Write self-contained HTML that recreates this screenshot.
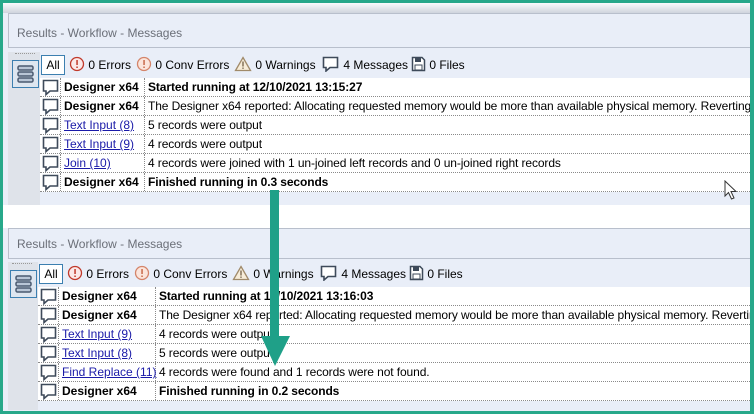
<!DOCTYPE html>
<html><head><style>
*{margin:0;padding:0;box-sizing:border-box}
body{width:754px;height:414px;overflow:hidden;background:#fff;font-family:"Liberation Sans",sans-serif;font-size:12px;color:#000;position:relative}
.a{position:absolute}
.title{position:absolute;left:8px;right:0;border:1px solid #b8bfcc;border-right:none;background:#e9eef8;color:#6b6f78;font-size:12px;padding-left:8px}
.panel{position:absolute;left:0;right:0;background:#e9eef8}
.rail{position:absolute;background:#dfe3ea}
.row{position:absolute;right:0;height:19px;background:#fff;border-bottom:1px dotted #8a8a8a;white-space:nowrap;line-height:18px;overflow:hidden}
.row span{position:absolute;top:0}
.b{font-weight:bold}
.l{color:#1a1aa8;text-decoration:underline}
.sep{position:absolute;top:0;bottom:0;border-left:1px dotted #8a8a8a}
.tb{position:absolute;white-space:nowrap;height:20px;line-height:20px}
.tb span{position:absolute}
</style></head><body>
<div class="panel" style="top:3px;height:202px"></div>
<div class="a" style="top:3px;left:0;right:0;height:10px;background:linear-gradient(#fafbfd,#cfd4dd)"></div>
<div class="title" style="top:13px;height:35px;line-height:38px">Results - Workflow - Messages</div>
<div class="rail" style="left:8px;top:52px;width:32px;height:153px"></div>
<div class="a" style="left:15px;top:53px;width:20px;border-top:1px dotted #999"></div>
<div class="a" style="left:12px;top:60px;width:27px;height:28px;border:1px solid #3c7fb0;background:#dde6f0">
<svg width="25" height="26" viewBox="0 0 25 26"><g fill="#b9c6d6" stroke="#4a5a70" stroke-width="1.5"><rect x="5" y="5" width="15" height="4" rx="1.5"/><rect x="5" y="11" width="15" height="4" rx="1.5"/><rect x="5" y="17" width="15" height="4" rx="1.5"/></g></svg></div>
<div class="tb" style="left:41px;top:55px;width:700px">
<span style="left:0;top:0;width:24px;height:20px;border:1px solid #3c7fb0;background:#fff;text-align:center;line-height:18px">All</span>
<span style="left:28px"><svg width="16" height="16" style="vertical-align:-3px"><circle cx="8" cy="8" r="6.5" fill="#fbe9e9" stroke="#c0392b" stroke-width="1.3"/><rect x="7.3" y="4" width="1.5" height="5" fill="#c0392b"/><rect x="7.3" y="10.5" width="1.5" height="1.5" fill="#c0392b"/></svg> 0 Errors</span>
<span style="left:95px"><svg width="16" height="16" style="vertical-align:-3px"><circle cx="8" cy="8" r="6.5" fill="#fbe5dc" stroke="#d4846a" stroke-width="1.3"/><rect x="7.3" y="4" width="1.5" height="5" fill="#c86a4a"/><rect x="7.3" y="10.5" width="1.5" height="1.5" fill="#c86a4a"/></svg> 0 Conv Errors</span>
<span style="left:193px"><svg width="18" height="16" style="vertical-align:-3px"><path d="M9 1.5 L16.5 14.5 H1.5 Z" fill="#f7ecd8" stroke="#a08a6a" stroke-width="1.3"/><rect x="8.3" y="5.5" width="1.4" height="5" fill="#7a6a50"/><rect x="8.3" y="11.5" width="1.4" height="1.4" fill="#7a6a50"/></svg> 0 Warnings</span>
<span style="left:281px"><svg width="18" height="16" style="vertical-align:-3px"><path d="M1.5 1.5 H15.5 V11.5 H8 L4 15 V11.5 H1.5 Z" fill="#fff" stroke="#3e4a5a" stroke-width="1.6"/></svg> 4 Messages</span>
<span style="left:370px"><svg width="15" height="16" style="vertical-align:-3px"><path d="M1.5 1.5 H11 L13.5 4 V14.5 H1.5 Z" fill="#fff" stroke="#3e4a5a" stroke-width="1.5"/><rect x="4" y="2" width="6" height="4" fill="#3e4a5a"/><rect x="4" y="9" width="7" height="5" fill="none" stroke="#3e4a5a"/></svg> 0 Files</span>
</div>
<div id="t1"></div>
<div class="panel" style="top:228px;height:186px"></div>
<div class="title" style="top:228px;height:31px;line-height:30px">Results - Workflow - Messages</div>
<div class="rail" style="left:8px;top:262px;width:30px;height:148px"></div>
<div class="a" style="left:12px;top:263px;width:20px;border-top:1px dotted #999"></div>
<div class="a" style="left:10px;top:270px;width:27px;height:28px;border:1px solid #3c7fb0;background:#dde6f0">
<svg width="25" height="26" viewBox="0 0 25 26"><g fill="#b9c6d6" stroke="#4a5a70" stroke-width="1.5"><rect x="5" y="5" width="15" height="4" rx="1.5"/><rect x="5" y="11" width="15" height="4" rx="1.5"/><rect x="5" y="17" width="15" height="4" rx="1.5"/></g></svg></div>
<div class="tb" style="left:39px;top:264px;width:700px">
<span style="left:0;top:0;width:24px;height:20px;border:1px solid #3c7fb0;background:#fff;text-align:center;line-height:18px">All</span>
<span style="left:28px"><svg width="16" height="16" style="vertical-align:-3px"><circle cx="8" cy="8" r="6.5" fill="#fbe9e9" stroke="#c0392b" stroke-width="1.3"/><rect x="7.3" y="4" width="1.5" height="5" fill="#c0392b"/><rect x="7.3" y="10.5" width="1.5" height="1.5" fill="#c0392b"/></svg> 0 Errors</span>
<span style="left:95px"><svg width="16" height="16" style="vertical-align:-3px"><circle cx="8" cy="8" r="6.5" fill="#fbe5dc" stroke="#d4846a" stroke-width="1.3"/><rect x="7.3" y="4" width="1.5" height="5" fill="#c86a4a"/><rect x="7.3" y="10.5" width="1.5" height="1.5" fill="#c86a4a"/></svg> 0 Conv Errors</span>
<span style="left:193px"><svg width="18" height="16" style="vertical-align:-3px"><path d="M9 1.5 L16.5 14.5 H1.5 Z" fill="#f7ecd8" stroke="#a08a6a" stroke-width="1.3"/><rect x="8.3" y="5.5" width="1.4" height="5" fill="#7a6a50"/><rect x="8.3" y="11.5" width="1.4" height="1.4" fill="#7a6a50"/></svg> 0 Warnings</span>
<span style="left:281px"><svg width="18" height="16" style="vertical-align:-3px"><path d="M1.5 1.5 H15.5 V11.5 H8 L4 15 V11.5 H1.5 Z" fill="#fff" stroke="#3e4a5a" stroke-width="1.6"/></svg> 4 Messages</span>
<span style="left:370px"><svg width="15" height="16" style="vertical-align:-3px"><path d="M1.5 1.5 H11 L13.5 4 V14.5 H1.5 Z" fill="#fff" stroke="#3e4a5a" stroke-width="1.5"/><rect x="4" y="2" width="6" height="4" fill="#3e4a5a"/><rect x="4" y="9" width="7" height="5" fill="none" stroke="#3e4a5a"/></svg> 0 Files</span>
</div>
<div id="t2"></div>
<script>
function mk(id,top,left,c1,c2,rows){
 var h='';
 var ic='<svg width="18" height="17" style="position:absolute;left:2px;top:1px"><path d="M1.5 1.5 H15.5 V12 H8 L4 15.5 V12 H1.5 Z" fill="#fff" stroke="#3e4a5a" stroke-width="1.6"/></svg>';
 rows.forEach(function(r,i){
  h+='<div class="row" style="left:'+left+'px;top:'+(top+i*19)+'px">'+ic+
  '<div class="sep" style="left:'+(c1-left)+'px"></div><div class="sep" style="left:'+(c2-left)+'px"></div>'+
  '<span class="'+r[0]+'" style="left:'+(c1-left+4)+'px">'+r[1]+'</span>'+
  '<span class="'+(r[3]||'')+'" style="left:'+(c2-left+4)+'px;letter-spacing:-0.1px">'+r[2]+'</span></div>';
 });
 document.getElementById(id).outerHTML=h;
}
mk('t1',78,40,60,144,[
['b','Designer x64','Started running at 12/10/2021 13:15:27','b'],
['b','Designer x64','The Designer x64 reported: Allocating requested memory would be more than available physical memory. Reverting to'],
['l','Text Input (8)','5 records were output'],
['l','Text Input (9)','4 records were output'],
['l','Join (10)','4 records were joined with 1 un-joined left records and 0 un-joined right records'],
['b','Designer x64','Finished running in 0.3 seconds','b']]);
mk('t2',287,38,58,155,[
['b','Designer x64','Started running at 12/10/2021 13:16:03','b'],
['b','Designer x64','The Designer x64 reported: Allocating requested memory would be more than available physical memory. Reverting to'],
['l','Text Input (9)','4 records were output'],
['l','Text Input (8)','5 records were output'],
['l','Find Replace (11)','4 records were found and 1 records were not found.'],
['b','Designer x64','Finished running in 0.2 seconds','b']]);
</script>
<svg class="a" style="left:724px;top:180px" width="14" height="20"><path d="M1 1 V16 L4.5 12.5 L7.5 19 L10 18 L7 11.5 H12 Z" fill="#fff" stroke="#333" stroke-width="1"/></svg>
<svg class="a" style="left:0;top:0" width="754" height="414"><path d="M270 190 H279 V336 H290 L275 366 L261 336 H270 Z" fill="#1fa088"/></svg>
<div class="a" style="left:0;top:0;width:754px;height:414px;border:3px solid #27a88a;border-right-width:4px"></div>
</body></html>
